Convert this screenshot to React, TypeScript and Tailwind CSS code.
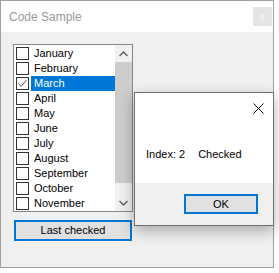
import React from "react";

// only the items that fit in the visible part of the list
const months = [
  "January",
  "February",
  "March",
  "April",
  "May",
  "June",
  "July",
  "August",
  "September",
  "October",
  "November",
];

function CheckBox({ checked }: { checked: boolean }) {
  return (
    <div className="w-[13px] h-[13px] shrink-0 border border-[#333333] bg-white flex items-center justify-center">
      {checked && (
        <svg width="11" height="11" viewBox="0 0 11 11">
          <path d="M1.5 5.5 L4 8.5 L9.5 2" fill="none" stroke="#555" strokeWidth="1" />
        </svg>
      )}
    </div>
  );
}

export default function App() {
  const selected = 2;

  return (
    <div
      className="relative w-[279px] h-[273px] bg-white overflow-hidden"
      style={{ fontFamily: '"Liberation Sans", Arial, sans-serif' }}
    >
      {/* Main window */}
      <div className="w-[274px] h-[268px] border border-[#a0a0a0] flex flex-col">
        <div className="h-[31px] bg-white flex items-center justify-between shrink-0">
          <span className="ml-[8px] text-[12px] text-[#9a9a9a]">Code Sample</span>
          <div className="w-[19px] h-[19px] mr-[1px] mt-[6px] self-start bg-[#e5e5e5] flex items-center justify-center text-[10px] text-[#f8f8f8]">
            x
          </div>
        </div>

        <div className="flex-1 bg-[#f0f0f0] flex flex-col">
          {/* Checked list box */}
          <div className="ml-[12px] mt-[12px] w-[120px] h-[168px] border border-[#828790] bg-white flex">
            <div className="w-[101px] pt-[1px] overflow-hidden">
              {months.map((m, i) => (
                <div key={m} className="h-[15px] flex items-center">
                  <div className="ml-[2px]">
                    <CheckBox checked={i === selected} />
                  </div>
                  <div
                    className={`ml-[2px] flex-1 h-[15px] pl-[3px] text-[11px] leading-[15px] ${
                      i === selected ? "bg-[#0078d7] text-white" : "text-black"
                    }`}
                  >
                    {m}
                  </div>
                </div>
              ))}
            </div>
            {/* Scrollbar */}
            <div className="w-[17px] bg-[#f0f0f0] flex flex-col">
              <div className="h-[17px] flex items-center justify-center">
                <svg width="9" height="6" viewBox="0 0 9 6">
                  <path d="M0.5 5 L4.5 1 L8.5 5" fill="none" stroke="#606060" strokeWidth="1.5" />
                </svg>
              </div>
              <div className="h-[121px] bg-[#cdcdcd]" />
              <div className="flex-1" />
              <div className="h-[17px] flex items-center justify-center">
                <svg width="9" height="6" viewBox="0 0 9 6">
                  <path d="M0.5 1 L4.5 5 L8.5 1" fill="none" stroke="#606060" strokeWidth="1.5" />
                </svg>
              </div>
            </div>
          </div>

          <button className="ml-[13px] mt-[8px] w-[118px] h-[21px] border-2 border-[#0078d7] bg-[#e1e1e1] text-[11px] text-black flex items-center justify-center">
            Last checked
          </button>
        </div>
      </div>

      {/* Message box */}
      <div className="absolute left-[134px] top-[92px] w-[140px] h-[134px] border border-[#6f6f6f] bg-white flex flex-col shadow-[0_5px_14px_rgba(0,0,0,0.3)]">
        <div className="h-[90px] bg-white flex flex-col">
          <div className="flex justify-end pr-[9px] pt-[10px]">
            <svg width="11" height="11" viewBox="0 0 11 11">
              <path d="M0.5 0.5 L10.5 10.5 M10.5 0.5 L0.5 10.5" stroke="#000" strokeWidth="1" />
            </svg>
          </div>
          <div className="ml-[11px] mt-[33px] text-[11px] text-black leading-[14px] flex">
            <span>Index: 2</span>
            <span className="ml-[13px]">Checked</span>
          </div>
        </div>
        <div className="flex-1 bg-[#f0f0f0] flex justify-end items-start">
          <button className="mt-[11px] mr-[15px] w-[74px] h-[20px] border-2 border-[#0078d7] bg-[#e1e1e1] text-[11px] text-black flex items-center justify-center">
            OK
          </button>
        </div>
      </div>
    </div>
  );
}
